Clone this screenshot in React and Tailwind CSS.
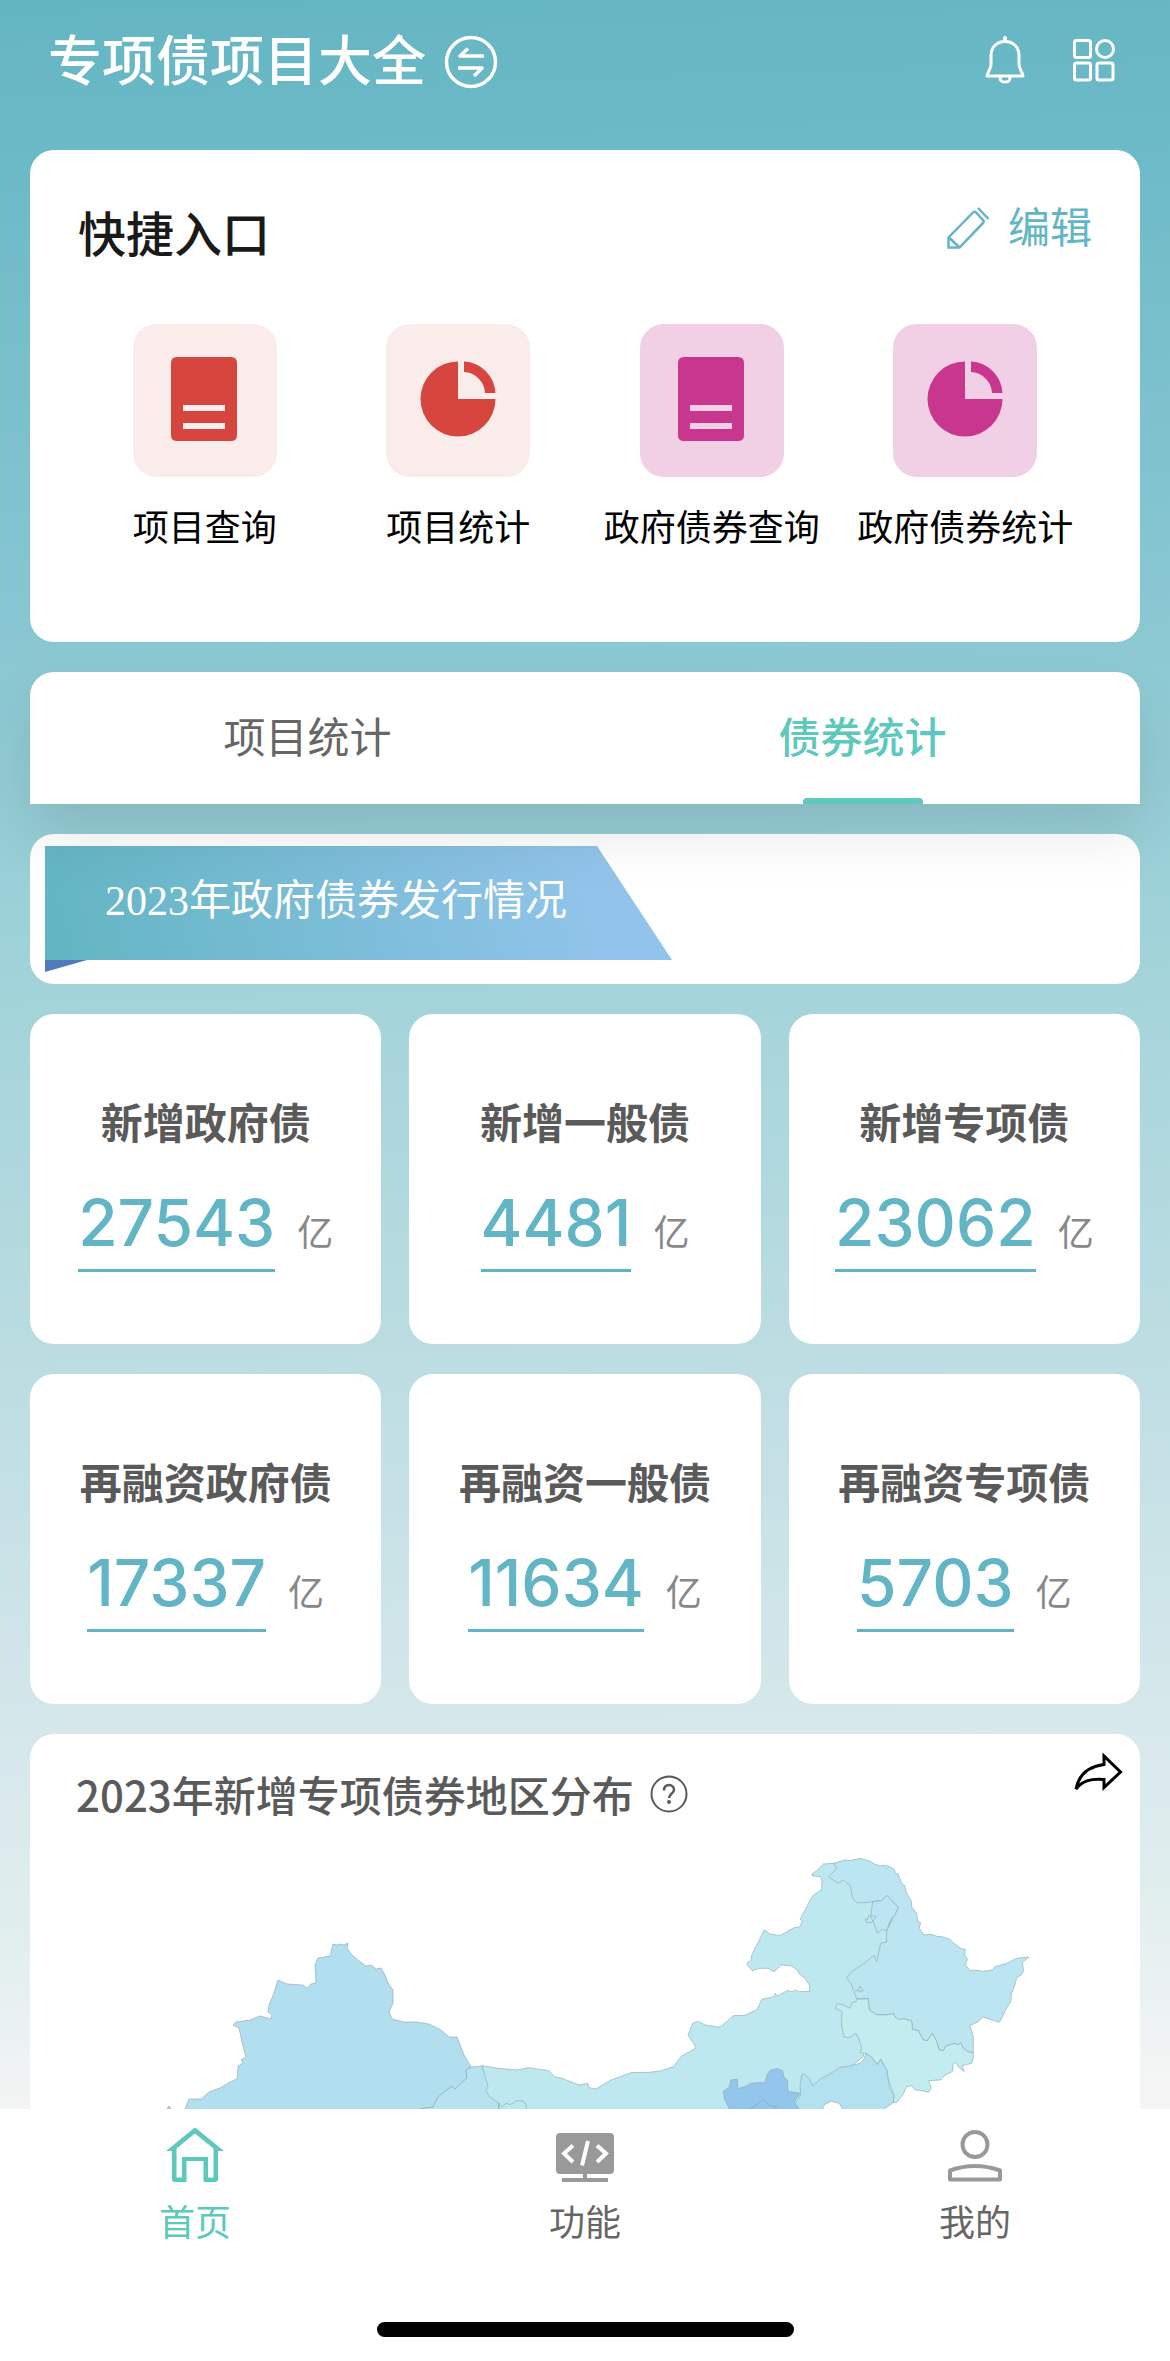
import { useState } from "react";
import clsx from "clsx";

const shortcuts = [
  { label: "项目查询", icon: "doc", tile: "bg-[#fbecec] text-[#d6463e]" },
  { label: "项目统计", icon: "pie", tile: "bg-[#fbecec] text-[#d6463e]" },
  { label: "政府债券查询", icon: "doc", tile: "bg-[#f1cfe4] text-[#c9368d]" },
  { label: "政府债券统计", icon: "pie", tile: "bg-[#f1cfe4] text-[#c9368d]" },
];

const stats = [
  { label: "新增政府债", value: "27543" },
  { label: "新增一般债", value: "4481" },
  { label: "新增专项债", value: "23062" },
  { label: "再融资政府债", value: "17337" },
  { label: "再融资一般债", value: "11634" },
  { label: "再融资专项债", value: "5703" },
];

const SwitchIcon = () => (
  <svg width="54" height="60" viewBox="0 0 54 60" fill="none" stroke="currentColor" strokeWidth="3.5">
    <ellipse cx="27" cy="30" rx="24.500" ry="24.500" />
    <path d="M40 24H16l8-7.500M14 36h24l-8 8" strokeLinejoin="round" />
  </svg>
);

const BellIcon = () => (
  <svg width="42" height="48" viewBox="0 0 42 48" fill="none" stroke="currentColor" strokeWidth="3" strokeLinejoin="round">
    <path d="M21 5.500c-8.500 0-14 6-14 14V28c0 5-3 7-4 12h36c-1-5-4-7-4-12v-8.500c0-8-5.500-14-14-14z" />
    <path d="M21 5V2" strokeWidth="4" strokeLinecap="round" />
    <path d="M16 40c0 5 1 6 5 6s5-1 5-6" />
  </svg>
);

const AppsIcon = () => (
  <svg width="44" height="44" viewBox="0 0 44 44" fill="none" stroke="currentColor" strokeWidth="3">
    <rect x="2.500" y="2.500" width="16" height="17" rx="2" />
    <circle cx="33" cy="11" r="8.500" />
    <rect x="2.500" y="25" width="16" height="17" rx="2" />
    <rect x="25" y="25" width="16" height="17" rx="2" />
  </svg>
);

const PencilIcon = () => (
  <svg width="44" height="44" viewBox="0 0 44 44" fill="none" stroke="currentColor" strokeWidth="2.500">
    <path d="M2.500 31.500L27 6.500q1.500-1.500 3 0l7 7.500q1.500 1.500 0 3L13.500 41.500h-11zM3 31.500l10.500 10M32 2l10.500 11" />
  </svg>
);

const DocIcon = () => (
  <svg className="h-full w-full" viewBox="0 0 144 153" fill="currentColor">
    <path
      fillRule="evenodd"
      d="M44 33h54q6 0 6 6v72q0 6-6 6H44q-6 0-6-6V39q0-6 6-6zM50 81v6h42v-6zM50 99v6h42v-6z"
    />
  </svg>
);

const PieIcon = () => (
  <svg className="h-full w-full" viewBox="0 0 144 153" fill="currentColor">
    <path d="M72 37.500A37.500 37.500 0 1 0 109.500 75H72z" />
    <path d="M78 37.500A33 33 0 0 1 109.500 69H99A22 22 0 0 0 78 48z" />
  </svg>
);

const HelpIcon = () => (
  <svg width="38" height="38" viewBox="0 0 38 38" fill="none" stroke="currentColor" strokeWidth="2">
    <circle cx="19" cy="19" r="17.500" />
    <path d="M14 15.500c0-3.500 2-5.500 5-5.500s5 2 5 4.800c0 4-5 4-5 8.200" strokeWidth="2.500" />
    <circle cx="19" cy="27" r="1" fill="currentColor" />
  </svg>
);

const ShareIcon = () => (
  <svg width="50" height="42" viewBox="0 0 50 42" fill="none" stroke="currentColor" strokeWidth="3">
    <path d="M30 4v8.500C14 14.500 5 22 2 37c6-8 14-10.500 28-9.500v8L46.500 20z" />
  </svg>
);

const HomeIcon = () => (
  <svg width="60" height="60" viewBox="0 0 60 60" fill="currentColor">
    <path
      fillRule="evenodd"
      d="M28 4q2-2 4 0l27 22h-6v28q0 3-3 3H38.500V36h-17v21H10q-3 0-3-3V26H1zM30 8.500l-18.500 15v29H17V32h26v20.500h5.500v-29z"
    />
  </svg>
);

const CodeIcon = () => (
  <svg width="60" height="60" viewBox="0 0 60 60">
    <rect x="1" y="8" width="58" height="41" rx="4" fill="currentColor" />
    <path d="M28 49h4v4h21v4H7v-4h21z" fill="currentColor" />
    <path d="M18 20.500l-9 8 9 8.500M42 20.500l9 8-9 8.500M33 16l-6 24.500" fill="none" stroke="#fff" strokeWidth="4" />
  </svg>
);

const UserIcon = () => (
  <svg width="60" height="60" viewBox="0 0 60 60" fill="none" stroke="currentColor" strokeWidth="4">
    <circle cx="30" cy="19.500" r="12.500" />
    <path d="M5 54.500V45.500Q30 36.500 55 45.500V54.500z" strokeLinejoin="round" />
  </svg>
);

const tabs = ["项目统计", "债券统计"];

const navItems = [
  { label: "首页", icon: HomeIcon },
  { label: "功能", icon: CodeIcon },
  { label: "我的", icon: UserIcon },
];

const RegionMap = () => (
  <svg className="block w-full" viewBox="0 0 1110 540" stroke="#8aa5ad" strokeOpacity="0.6" role="img" aria-label="地区分布">
    {/* 新疆 */}
    <path
      fill="#b1dff0"
      d="M155 269l4-10 12 0 8-7 11-4 10-6 7-3 1-13 5-3-2-3 5-3-4-15-3-14-6-3 3-3 14-2 10-4 11 3 1-4-4-3 1-7 5-12 4-13 9 4 16 1 4 3 4-4 5-1-1-18 3-7 12-2 3-12 4 1 4-1 3 1 4-2-1 5 4 6 8 7 7 5 5-1 5 4 5-1 3 5 4 10 5 7 0 13-4 9 3 7 12 3 12 0 13 2 12 6 8 7 8 0 7 18 7 12-5 3 1 8-12 11-3-3-14 11-5 10-13 2v60H155z"
    />
    <path fill="#b7e3f0" d="M441 227l11-1 5 12 5 9-3 4 9 9 1 9v60h-79v-60l13-2 5-10 14-11 3 3 12-11-1-8z" />
    <path fill="#b1dff0" d="M137 269l2-3 2 3z" />
    <g transform="translate(620 -120) scale(0.3333)" strokeWidth="3">
      {/* 内蒙古 */}
      <path
        fill="#bde8f0"
        d="M-504 1037L-456 1045-399 1050-366 1043-303 1052-288 1070-264 1075-213 1095-186 1090-183 1103-162 1107-117 1080-57 1058 0 1057 35 1052 70 1040 95 1008 138 985 132 972 114 945 128 910 145 904 165 915 210 922 250 887 285 886 322 868 335 838 372 830 376 820 382 828 412 812 430 815 436 809 445 815 480 814 478 795 465 775 448 762 442 750 425 738 395 735 372 755 355 745 325 745 308 753 291 735 293 727 303 722 305 705 343 630 360 642 390 647 430 624 450 620 457 603 450 598 465 570 488 528 515 508 516 480 510 470 488 468 486 462 500 452 520 432 552 430 720 540 745 560 710 630 710 668 700 800 660 860 640 1010 580 1060 540 1170 440 1230H-453V1170L-456 1148-482 1130-492 1112-486 1100z"
      />
      {/* 黑龙江 */}
      <path
        fill="#bce5f2"
        d="M552 430L585 420 600 422 630 415 660 424 675 433 690 437 705 436 720 440 733 448 736 460 745 462 748 472 755 490 765 497 768 515 785 545 785 560 800 580 803 603 812 608 808 625 822 645 845 643 860 649 875 650 898 657 912 670 935 687 946 688 944 705 953 718 946 732 960 752 975 750 1000 754 1028 750 1035 740 1070 730 1100 715 1137 711 1117 728 1121 752 1114 765 1100 773 1095 795 1085 820 1082 845 1065 873 1058 890 1048 907 998 891 985 905 960 917 970 950 970 998 955 996 940 985 932 968 924 975 916 970 888 978 880 992 868 990 860 965 848 940 832 962 820 960 805 932 788 928 785 903 765 897 745 898 735 890 730 880 708 885 680 884 658 870 655 836 620 836 612 815 604 792 590 773 605 755 640 732 672 706 680 726 692 670 710 666 710 632 745 562 710 526 695 542 665 545 650 548 620 548 608 535 600 495 590 488 580 480 565 490 536 471 560 445z"
      />
      <path fill="#bbe6f1" d="M668 545L695 542 710 526 745 562 735 585 722 600 710 632 695 628 682 640 672 610 662 590z" />
      <path fill="none" d="M646 596l8 2 2-10 22 0-4 10-10 10-14 0zM616 812l10-2 4-12 10 14-12 4-6-6" />
      {/* 吉林 */}
      <path
        fill="#c3ecf0"
        d="M620 838L655 836 658 870 680 884 708 885 730 880 735 890 745 898 765 897 785 903 788 928 805 932 820 960 832 962 848 940 860 965 868 990 880 992 888 978 916 970 924 975 932 968 940 985 955 996 970 998 970 1015 965 1030 936 1038 943 1055 925 1040 918 1028 910 1030 907 1055 885 1065 872 1080 836 1082 844 1105 836 1117 815 1112 795 1110 785 1097 770 1100 760 1122 740 1148 730 1148 732 1125 715 1080 710 1050 692 1018 682 1034 665 1012 648 1000 630 998 635 985 628 960 618 940 600 952 583 952 575 920 575 895 577 875 556 865 562 850 580 855 600 865 607 848 618 845z"
      />
      {/* 辽宁 */}
      <path
        fill="#b3e1f0"
        d="M648 1000L665 1012 682 1034 692 1018 710 1050 715 1080 720 1105 732 1125 730 1148 705 1165 700 1230H440L436 1150 452 1125 450 1100 455 1065 462 1062 478 1075 488 1098 510 1078 540 1062 570 1042 590 1040 610 1035 630 1030 640 1020z"
      />
      <path fill="#fff" d="M576 1180l2-12-10-18-24-6-18 8-8 12 14 20z" />
      {/* 河北 */}
      <path
        fill="#92c6ec"
        d="M240 1170l-16-32-4-24 18-12 4-22 20-2 2 28 20-6 20-10 20-2 20 0 8-26 10-12 20-4 16 6 4 20 10 8 2 34 36 6-18 26 16 20v60H240z"
      />
      <path fill="#92c6ec" d="M298 1168l20-12 22-18 16 18 24 4-10 10z" />
      <path fill="none" d="M-453 1170l0-20 10 12 10-12 14 4 20-12 20 2 8 12 0 20" />
    </g>
  </svg>
);

export default function App() {
  const [tab, setTab] = useState("债券统计");
  const [page, setPage] = useState("首页");

  return (
    <div className="flex h-screen flex-col bg-white font-['Inter','Noto_Sans_CJK_SC',sans-serif]">
      <main className="min-h-0 flex-1 overflow-hidden bg-[linear-gradient(178deg,#64b5c2_0%,#6fbbc8_10%,#8ac8d2_31%,#a3d4da_47%,#bcdde2_64%,#d7e8ec_82%,#e1eeee_90%,#f5f5f5_99%)] px-[30px]">
        <header className="flex h-[120px] items-center justify-between pr-6 pl-[18px] text-white">
          <button type="button" className="flex items-center gap-[18px] pt-1">
            <h1 className="text-[54px] leading-[60px] font-medium">专项债项目大全</h1>
            <SwitchIcon />
          </button>
          <div className="flex items-center gap-[46px]">
            <button type="button" aria-label="消息"><BellIcon /></button>
            <button type="button" aria-label="应用"><AppsIcon /></button>
          </div>
        </header>

        <section className="mt-[30px] h-[492px] rounded-3xl bg-white px-12 pt-12">
          <div className="flex h-[66px] items-start justify-between">
            <h2 className="pt-1 text-[48px] leading-[66px] font-medium text-[#1a1a1a]">快捷入口</h2>
            <button type="button" className="flex items-center gap-[18px] text-[42px] leading-[60px] text-[#62b5c5]">
              <PencilIcon />
              编辑
            </button>
          </div>
          <div className="mt-[60px] grid grid-cols-4">
            {shortcuts.map((s) => (
              <a key={s.label} href="#" className="flex flex-col items-center">
                <span className={clsx("h-[153px] w-36 rounded-3xl", s.tile)}>
                  {s.icon === "doc" ? <DocIcon /> : <PieIcon />}
                </span>
                <span className="mt-6 text-[36px] leading-[54px] whitespace-nowrap text-black">{s.label}</span>
              </a>
            ))}
          </div>
        </section>

        <div role="tablist" className="relative z-10 mt-[30px] grid h-[132px] grid-cols-2 rounded-t-3xl bg-white shadow-[0_30px_60px_rgba(0,0,0,0.1)]">
          {tabs.map((t) => (
            <button
              key={t}
              type="button"
              role="tab"
              aria-selected={tab === t}
              onClick={() => setTab(t)}
              className={clsx(
                "relative text-[42px] leading-[60px]",
                tab === t ? "font-medium text-[#5cc9bc]" : "text-[#666]"
              )}
            >
              {t}
              {tab === t && (
                <span className="absolute bottom-0 left-1/2 h-[6px] w-[120px] -translate-x-1/2 rounded-t-sm bg-[#5cc9bc]" />
              )}
            </button>
          ))}
        </div>

        <section className="mt-[30px] h-[150px] rounded-3xl bg-white px-[15px] pt-3">
          <h2 className="flex h-[114px] w-[627px] items-center bg-[linear-gradient(75deg,#62b5c2,#92c4eb_88%)] pb-1 pl-[60px] font-['Liberation_Serif','Noto_Sans_CJK_SC',sans-serif] text-[42px] leading-[60px] text-white [clip-path:polygon(0_0,552px_0,100%_100%,0_100%)]">
            2023年政府债券发行情况
          </h2>
          <div className="h-3 w-[42px] bg-[#507ab8] [clip-path:polygon(0_0,100%_0,0_100%)]" />
        </section>

        <section className="mt-[30px] grid grid-cols-3 gap-x-7 gap-y-[30px]">
          {stats.map((s) => (
            <div key={s.label} className="flex h-[330px] flex-col items-center rounded-3xl bg-white pt-20">
              <h3 className="text-[42px] leading-[60px] font-bold text-[#5a5a5a]">{s.label}</h3>
              <p className="mt-[22px] flex items-baseline gap-[22px]">
                <a href="#" className="border-b-3 border-[#62b5c5] text-[64px] leading-[93px] font-medium text-[#62b5c5]">
                  {s.value}
                </a>
                <span className="text-[36px] text-[#888]">亿</span>
              </p>
            </div>
          ))}
        </section>

        <section className="relative mt-[30px] rounded-t-3xl bg-white pt-[30px]">
          <div className="flex h-[60px] items-center gap-4 pl-[46px] text-[#5a5a5a]">
            <h2 className="font-['Noto_Sans_CJK_SC',sans-serif] text-[42px] leading-[60px] font-medium">2023年新增专项债券地区分布</h2>
            <button type="button" aria-label="说明"><HelpIcon /></button>
          </div>
          <button type="button" aria-label="分享" className="absolute top-[18px] right-4 text-black">
            <ShareIcon />
          </button>
          <div className="pt-4">
            <RegionMap />
          </div>
        </section>
      </main>

      <nav className="h-[252px] shrink-0 bg-white">
        <div className="grid grid-cols-3 pt-4">
          {navItems.map(({ label, icon: Icon }) => (
            <button
              key={label}
              type="button"
              onClick={() => setPage(label)}
              className={clsx("flex flex-col items-center", page === label ? "text-[#5cc9bc]" : "text-[#999]")}
            >
              <Icon />
              <span className={clsx("mt-[14px] text-[36px] leading-[48px]", page !== label && "text-[#666]")}>{label}</span>
            </button>
          ))}
        </div>
        <div className="mx-auto mt-[75px] h-[15px] w-[417px] rounded-full bg-black" />
      </nav>
    </div>
  );
}
